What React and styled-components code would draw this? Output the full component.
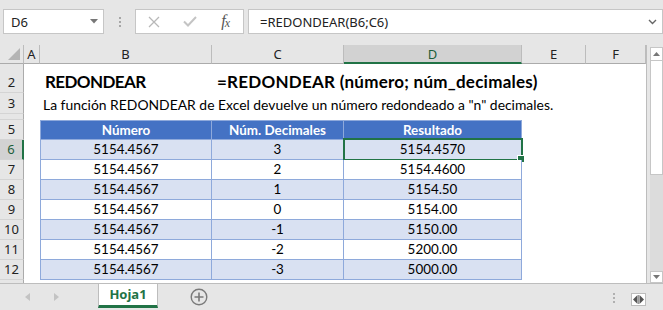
import React from 'react';
import styled, { createGlobalStyle } from 'styled-components';

const C = {
  green: '#217346',
  chrome: '#e6e6e6',
  box: '#c6c6c6',
  headLine: '#bcbcbc',
  rowLine: '#d4d4d4',
  selHead: '#d2d2d2',
  blue: '#4472c4',
  band: '#d9e1f2',
  tLine: '#8ea9db',
};

const CALIBRI = `Lato, "Liberation Sans", sans-serif`;
const SEGOE = `"Noto Sans", "Open Sans", sans-serif`;

const GlobalStyle = createGlobalStyle`
  html, body { margin: 0; padding: 0; background: ${C.chrome}; overflow: hidden; }
  *, *::before, *::after { box-sizing: border-box; }
`;

const Window = styled.div`
  width: 663px;
  height: 310px;
  display: flex;
  flex-direction: column;
  background: ${C.chrome};
  font-family: ${SEGOE};
  color: #000;
  overflow: hidden;
`;

/* ---------- formula bar ---------- */
const FormulaBar = styled.div`
  height: 45px;
  flex: none;
  display: flex;
  align-items: flex-start;
  padding: 9px 0 0 3px;
`;

const Field = styled.div`
  height: 25px;
  background: #fff;
  border: 1px solid ${C.box};
  display: flex;
  align-items: center;
`;

const NameBox = styled(Field)`
  width: 101px;
  padding: 0 5px 0 7px;
  justify-content: space-between;
  font-size: 13px;
  color: #222;
`;

const Grip = styled.div`
  display: flex;
  flex-direction: column;
  gap: 2px;
  margin: 8px 14px 0 15px;
`;

const GripDot = styled.i`
  display: block;
  width: 2px;
  height: 2px;
  background: ${(p) => p.$color || '#a6a6a6'};
`;

const ButtonGroup = styled(Field)`
  width: 109px;
`;

const BarButton = styled.div`
  width: 36px;
  height: 100%;
  display: flex;
  align-items: center;
  justify-content: center;
`;

const Fx = styled.span`
  font-family: "Liberation Serif", "DejaVu Serif", serif;
  font-style: italic;
  font-size: 16px;
  color: #555;
  letter-spacing: -1px;
  sub {
    font-size: 12px;
    vertical-align: -1px;
  }
`;

const FormulaInput = styled(Field)`
  flex: 1;
  margin-left: 4px;
  padding: 0 5px 0 11px;
  justify-content: space-between;
  font-size: 13px;
  color: #222;
`;

/* ---------- sheet ---------- */
const SheetArea = styled.div`
  height: 238px;
  flex: none;
  display: flex;
`;

const Grid = styled.div`
  width: 647px;
  display: grid;
  grid-template-columns: 24px 16px 172px 132px 178px 64px 60px;
  grid-template-rows: 19px 29px 21px 6px repeat(8, 20px) 3px;
  background: #fff;
  border-right: 1px solid #bdbdbd;
`;

const Corner = styled.div`
  grid-column: 1;
  grid-row: 1;
  background: ${C.chrome};
  border-right: 1px solid ${C.headLine};
  border-bottom: 1px solid #ababab;
  display: flex;
  align-items: flex-end;
  justify-content: flex-end;
  padding: 0 3px 3px 0;
`;

const ColHead = styled.div`
  grid-row: 1;
  background: ${(p) => (p.$selected ? C.selHead : C.chrome)};
  border-right: 1px solid ${C.headLine};
  border-bottom: ${(p) => (p.$selected ? `2px solid ${C.green}` : '1px solid #ababab')};
  color: ${(p) => (p.$selected ? '#1d5e3a' : '#222')};
  font-size: 13px;
  line-height: 18px;
  text-align: center;
`;

const RowHead = styled.div`
  grid-column: 1;
  grid-row: ${(p) => p.$row};
  background: ${(p) => (p.$selected ? C.selHead : C.chrome)};
  border-right: ${(p) => (p.$selected ? `2px solid ${C.green}` : '1px solid #ababab')};
  border-bottom: ${(p) => (p.$last ? 'none' : `1px solid ${C.rowLine}`)};
  color: ${(p) => (p.$selected ? '#1d5e3a' : '#222')};
  font-size: 13px;
  line-height: 20px;
  display: flex;
  align-items: flex-end;
  justify-content: center;
  overflow: hidden;
`;

const TitleRow = styled.div`
  grid-column: 3 / 8;
  grid-row: 2;
  display: flex;
  align-items: flex-end;
  font-family: ${CALIBRI};
  font-weight: 700;
  font-size: 17px;
  line-height: 1.2;
  padding-bottom: 1px;
  white-space: nowrap;
`;

const TitleCell = styled.span`
  width: ${(p) => p.$width || 'auto'};
  flex: none;
  padding-left: 5px;
  letter-spacing: ${(p) => p.$spacing || 0};
`;

const DescRow = styled.div`
  grid-column: 3 / 8;
  grid-row: 3;
  display: flex;
  align-items: flex-end;
  font-family: ${CALIBRI};
  font-size: 13.9px;
  line-height: 1.2;
  padding-left: 3px;
  white-space: nowrap;
`;

const Table = styled.div`
  grid-column: 3 / 6;
  grid-row: 5 / 13;
  display: grid;
  grid-template-columns: 172px 132px 178px;
  grid-auto-rows: 20px;
  font-family: ${CALIBRI};
  font-size: 13.4px;
`;

const TCell = styled.div`
  position: relative;
  background: ${(p) => (p.$head ? C.blue : p.$band ? C.band : '#fff')};
  color: ${(p) => (p.$head ? '#fff' : '#000')};
  font-weight: ${(p) => (p.$head ? 700 : 400)};
  border-right: 1px solid ${C.tLine};
  border-bottom: 1px solid ${C.tLine};
  border-left: ${(p) => (p.$first ? `1px solid ${C.tLine}` : 'none')};
  border-top: ${(p) => (p.$head ? `1px solid ${C.tLine}` : 'none')};
  text-align: center;
  line-height: 19px;
  white-space: nowrap;
`;

const Selection = styled.div`
  position: absolute;
  left: -1px;
  right: -2px;
  top: -2px;
  bottom: -2px;
  border: 2px solid ${C.green};
  pointer-events: none;
  &::after {
    content: '';
    position: absolute;
    width: 6px;
    height: 6px;
    right: -3px;
    bottom: -3px;
    background: ${C.green};
    box-shadow: -1px -1px 0 #fff;
  }
`;

/* ---------- vertical scrollbar ---------- */
const VScroll = styled.div`
  width: 16px;
  flex: none;
  display: flex;
  flex-direction: column;
  padding: 2px 0 0 3px;
  background: ${C.chrome};
`;

const ScrollBtn = styled.div`
  height: ${(p) => p.$h}px;
  flex: none;
  background: #fff;
  border: 1px solid ${C.box};
  display: flex;
  align-items: center;
  justify-content: center;
`;

const Thumb = styled.div`
  height: 114px;
  flex: none;
  background: #fff;
  border: 1px solid ${C.box};
  border-top: none;
`;

const Track = styled.div`
  flex: 1;
  background: #dcdcdc;
`;

/* ---------- tab bar ---------- */
const TabBar = styled.div`
  flex: 1;
  display: flex;
  align-items: flex-start;
  border-top: 1px solid #bdbdbd;
`;

const TabNav = styled.div`
  width: 98px;
  height: 25px;
  flex: none;
  display: flex;
  align-items: center;
  gap: 24px;
  padding-left: 25px;
`;

const SheetTab = styled.div`
  width: 60px;
  height: 24px;
  flex: none;
  background: #fff;
  border-left: 1px solid #bdbdbd;
  border-right: 1px solid #bdbdbd;
  border-bottom: 3px solid ${C.green};
  color: ${C.green};
  font-weight: 700;
  font-size: 13px;
  line-height: 20px;
  text-align: center;
`;

const AddSheet = styled.div`
  margin-left: 32px;
  height: 25px;
  display: flex;
  align-items: center;
`;

const Spacer = styled.div`
  flex: 1;
`;

const TabGrip = styled(Grip)`
  margin: 9px 16px 0 0;
`;

const SplitBox = styled.div`
  width: 15px;
  height: 13px;
  margin: 9px 17px 0 0;
  border: 1px solid #bdbdbd;
  background: #fff;
  display: flex;
  align-items: center;
  justify-content: center;
`;

const rows = [
  ['5154.4567', '3', '5154.4570'],
  ['5154.4567', '2', '5154.4600'],
  ['5154.4567', '1', '5154.50'],
  ['5154.4567', '0', '5154.00'],
  ['5154.4567', '-1', '5150.00'],
  ['5154.4567', '-2', '5200.00'],
  ['5154.4567', '-3', '5000.00'],
];

const cols = ['A', 'B', 'C', 'D', 'E', 'F'];

export default function App() {
  return (
    <>
      <GlobalStyle />
      <Window>
        <FormulaBar>
          <NameBox>
            <span>D6</span>
            <svg width="8" height="5" viewBox="0 0 8 5">
              <path d="M0 0h8L4 4.5z" fill="#777" />
            </svg>
          </NameBox>
          <Grip>
            <GripDot />
            <GripDot />
            <GripDot />
          </Grip>
          <ButtonGroup>
            <BarButton>
              <svg width="12" height="12" viewBox="0 0 12 12">
                <path d="M1 1l10 10M11 1L1 11" stroke="#b8b8b8" strokeWidth="1.3" fill="none" />
              </svg>
            </BarButton>
            <BarButton>
              <svg width="14" height="11" viewBox="0 0 14 11">
                <path d="M1 5.5l4 4L13 1" stroke="#c4c4c4" strokeWidth="2" fill="none" />
              </svg>
            </BarButton>
            <BarButton>
              <Fx>
                f<sub>x</sub>
              </Fx>
            </BarButton>
          </ButtonGroup>
          <FormulaInput>
            <span>=REDONDEAR(B6;C6)</span>
            <svg width="9" height="6" viewBox="0 0 9 6">
              <path d="M1 1l3.5 3.5L8 1" stroke="#666" strokeWidth="1.4" fill="none" />
            </svg>
          </FormulaInput>
        </FormulaBar>

        <SheetArea>
          <Grid>
            <Corner>
              <svg width="12" height="12" viewBox="0 0 12 12">
                <path d="M12 0v12H0z" fill="#b4b4b4" />
              </svg>
            </Corner>
            {cols.map((c) => (
              <ColHead key={c} $selected={c === 'D'}>
                {c}
              </ColHead>
            ))}

            <RowHead $row={2}>2</RowHead>
            <RowHead $row={3}>3</RowHead>
            <RowHead $row={4} />
            {[5, 6, 7, 8, 9, 10, 11, 12].map((r, i) => (
              <RowHead key={r} $row={5 + i} $selected={r === 6}>
                {r}
              </RowHead>
            ))}
            <RowHead $row={13} $last />

            <TitleRow>
              <TitleCell $width="172px" $spacing="-0.6px">REDONDEAR</TitleCell>
              <TitleCell $spacing="0.25px">=REDONDEAR (número; núm_decimales)</TitleCell>
            </TitleRow>
            <DescRow>
              La función REDONDEAR de Excel devuelve un número redondeado a "n" decimales.
            </DescRow>

            <Table>
              <TCell $head $first>Número</TCell>
              <TCell $head>Núm. Decimales</TCell>
              <TCell $head>Resultado</TCell>
              {rows.map((r, i) => (
                <React.Fragment key={i}>
                  <TCell $first $band={i % 2 === 0}>{r[0]}</TCell>
                  <TCell $band={i % 2 === 0}>{r[1]}</TCell>
                  <TCell $band={i % 2 === 0}>
                    {r[2]}
                    {i === 0 && <Selection />}
                  </TCell>
                </React.Fragment>
              ))}
            </Table>
          </Grid>
          <VScroll>
            <ScrollBtn $h={14}>
              <svg width="7" height="4" viewBox="0 0 7 4">
                <path d="M0 4h7L3.5 0z" fill="#777" />
              </svg>
            </ScrollBtn>
            <Thumb />
            <Track />
            <ScrollBtn $h={12}>
              <svg width="7" height="4" viewBox="0 0 7 4">
                <path d="M0 0h7L3.5 4z" fill="#777" />
              </svg>
            </ScrollBtn>
          </VScroll>
        </SheetArea>

        <TabBar>
          <TabNav>
            <svg width="5" height="8" viewBox="0 0 5 8">
              <path d="M5 0v8L0 4z" fill="#c3c3c3" />
            </svg>
            <svg width="5" height="8" viewBox="0 0 5 8">
              <path d="M0 0v8L5 4z" fill="#c3c3c3" />
            </svg>
          </TabNav>
          <SheetTab>Hoja1</SheetTab>
          <AddSheet>
            <svg width="18" height="18" viewBox="0 0 18 18">
              <circle cx="9" cy="9" r="7.8" stroke="#7a7a7a" strokeWidth="1.4" fill="none" />
              <path d="M9 4.5v9M4.5 9h9" stroke="#7a7a7a" strokeWidth="1.6" />
            </svg>
          </AddSheet>
          <Spacer />
          <TabGrip>
            <GripDot $color="#b0b0b0" />
            <GripDot $color="#b0b0b0" />
            <GripDot $color="#b0b0b0" />
          </TabGrip>
          <SplitBox>
            <svg width="11" height="9" viewBox="0 0 11 9">
              <path d="M4.5 0v9L0 4.5z" fill="#555" />
              <path d="M6.5 0v9L11 4.5z" fill="#555" />
              <path d="M5.5 0v9" stroke="#999" strokeWidth="1" />
            </svg>
          </SplitBox>
        </TabBar>
      </Window>
    </>
  );
}
